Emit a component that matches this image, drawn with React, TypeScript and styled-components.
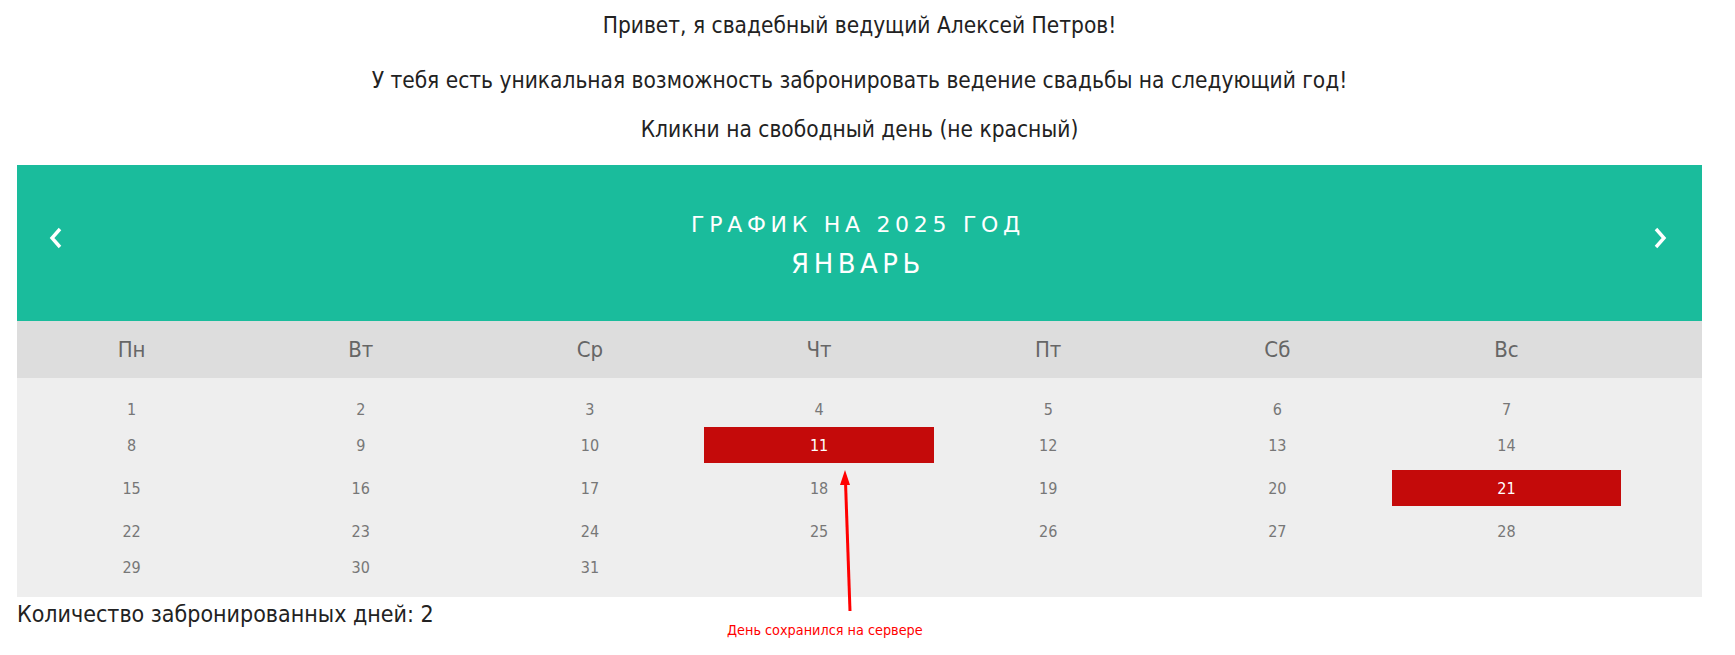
import React from 'react';
import styled, { createGlobalStyle } from 'styled-components';

const GlobalStyle = createGlobalStyle`
  * { box-sizing: border-box; }
  body {
    margin: 0;
    background: #fff;
    font-family: "DejaVu Sans Condensed", Tahoma, "DejaVu Sans", sans-serif;
    color: #222;
  }
`;

const Page = styled.div`
  position: relative;
  width: 1702px;
  min-height: 655px;
  padding: 13px 0 0 17px;
`;

const Intro = styled.p<{ $top: number }>`
  margin: ${(p) => p.$top}px 0 0;
  font-size: 22.5px;
  line-height: 24px;
  text-align: center;
`;

const Calendar = styled.div`
  margin-top: 24px;
`;

const Banner = styled.div`
  display: flex;
  align-items: center;
  justify-content: space-between;
  height: 156px;
  padding: 0 35px 0 32px;
  background: #1abc9c;
  color: #fff;
`;

const NavButton = styled.button`
  display: flex;
  align-items: center;
  margin-top: -10px;
  padding: 0;
  border: 0;
  background: none;
  cursor: pointer;
`;

const Titles = styled.div`
  display: flex;
  flex-direction: column;
  align-items: center;
  gap: 11px;
  margin-top: 3px;
  font-family: "DejaVu Sans", Verdana, sans-serif;
  text-transform: uppercase;
`;

const Title = styled.div<{ $size: number; $spacing: number }>`
  font-size: ${(p) => p.$size}px;
  line-height: 28px;
  letter-spacing: ${(p) => p.$spacing}px;
`;

const Weekdays = styled.div`
  display: grid;
  grid-template-columns: repeat(7, 13.6%);
  align-items: center;
  height: 57px;
  background: #ddd;
`;

const Weekday = styled.div`
  text-align: center;
  font-size: 22px;
  color: #666;
`;

const Days = styled.div`
  display: grid;
  grid-template-columns: repeat(7, 13.6%);
  align-items: start;
  padding: 13px 0 12px;
  background: #eee;
`;

const Day = styled.div<{ $active?: boolean }>`
  display: flex;
  align-items: center;
  justify-content: center;
  height: 36px;
  margin-bottom: ${(p) => (p.$active ? '7px' : '0')};
  font-size: 16px;
  color: ${(p) => (p.$active ? '#fff' : '#777')};
  background: ${(p) => (p.$active ? '#c40a0a' : 'transparent')};
  cursor: pointer;
`;

const Counter = styled.div`
  margin-top: 4px;
  font-size: 23px;
  line-height: 26px;
  color: #222;
`;

const Arrow = styled.svg`
  position: absolute;
  left: 836px;
  top: 468px;
  overflow: visible;
`;

const Note = styled.div`
  position: absolute;
  left: 727px;
  top: 621px;
  font-size: 14.3px;
  line-height: 18px;
  color: #f00;
  white-space: nowrap;
`;

const Chevron: React.FC<{ dir: 'left' | 'right' }> = ({ dir }) => (
  <svg width="14" height="22" viewBox="0 0 14 22">
    <polyline
      points={dir === 'left' ? '11,2 3,11 11,20' : '3,2 11,11 3,20'}
      fill="none"
      stroke="#fff"
      strokeWidth="3.4"
    />
  </svg>
);

const weekdays = ['Пн', 'Вт', 'Ср', 'Чт', 'Пт', 'Сб', 'Вс'];
const booked = [11, 21];
const days = Array.from({ length: 31 }, (_, i) => i + 1);

const App: React.FC = () => {
  return (
    <Page>
      <GlobalStyle />
      <Intro $top={0}>Привет, я свадебный ведущий Алексей Петров!</Intro>
      <Intro $top={31}>У тебя есть уникальная возможность забронировать ведение свадьбы на следующий год!</Intro>
      <Intro $top={25}>Кликни на свободный день (не красный)</Intro>
      <Calendar>
        <Banner>
          <NavButton aria-label="prev">
            <Chevron dir="left" />
          </NavButton>
          <Titles>
            <Title $size={22} $spacing={4.7}>График на 2025 год</Title>
            <Title $size={26} $spacing={4.5}>Январь</Title>
          </Titles>
          <NavButton aria-label="next">
            <Chevron dir="right" />
          </NavButton>
        </Banner>
        <Weekdays>
          {weekdays.map((d) => (
            <Weekday key={d}>{d}</Weekday>
          ))}
        </Weekdays>
        <Days>
          {days.map((d) => (
            <Day key={d} $active={booked.includes(d)}>
              {d}
            </Day>
          ))}
        </Days>
      </Calendar>
      <Counter>Количество забронированных дней: {booked.length}</Counter>
      <Arrow width="20" height="150" viewBox="0 0 20 150">
        <line x1="14" y1="143" x2="9.5" y2="14" stroke="#f00" strokeWidth="3" />
        <polygon points="9,2 14,17 4,17" fill="#f00" />
      </Arrow>
      <Note>День сохранился на сервере</Note>
    </Page>
  );
};

export default App;
